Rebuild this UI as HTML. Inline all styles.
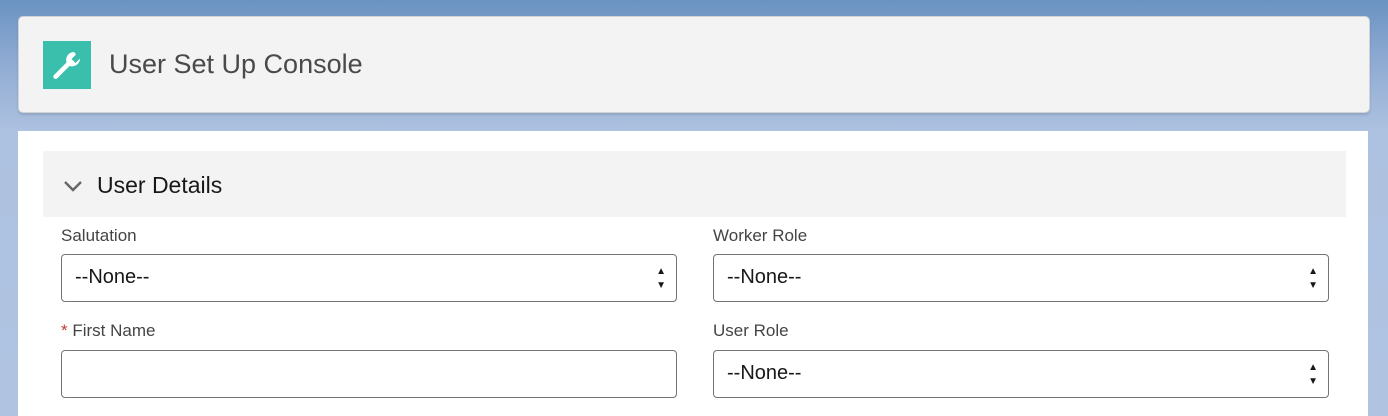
<!DOCTYPE html>
<html style="background:#b0c4e2"><head><style>
*{box-sizing:border-box;margin:0;padding:0}
body{width:1388px;height:416px;overflow:hidden;font-family:"Liberation Sans",sans-serif;background:linear-gradient(#6a93c2 0px,#8eaad2 60px,#adc1e0 130px,#b0c4e2 416px);position:relative}
.hdr{position:absolute;left:18px;top:16px;width:1352px;height:97px;background:#f3f3f3;border:1px solid #d0d3d8;border-radius:5px;box-shadow:0 2px 2px rgba(0,0,0,.12)}
.icon{position:absolute;left:24px;top:24px;width:48px;height:48px;background:#3bbfad}
.title{position:absolute;left:90px;top:32px;font-size:27px;color:#4a4a4a;font-weight:300}
.card{position:absolute;left:18px;top:131px;width:1350px;height:285px;background:#fff}
.sec{position:absolute;left:25px;top:20px;width:1303px;height:66px;background:#f3f3f3}
.sec span{position:absolute;left:54px;top:21px;font-size:23px;color:#181818}
.lbl{position:absolute;font-size:17px;color:#444}
.box{position:absolute;width:616px;height:48px;border:1px solid #747474;border-radius:4px;font-size:20px;color:#181818;padding:11px 0 0 13px}
.arr{position:absolute;right:10px;top:10px;font-size:10px;line-height:14px;color:#181818}
</style></head><body>
<div class="hdr"><div class="icon"><svg width="48" height="48" viewBox="0 0 48 48"><path d="M31 11a8 8 0 0 0-7.5 10.5L11 34a2.3 2.3 0 0 0 3.3 3.3L26.5 25A8 8 0 0 0 37 17.5l-4.5 4.5-4-4 4.5-4.5A8 8 0 0 0 31 11z" fill="#fff"/></svg></div><div class="title">User Set Up Console</div></div>
<div class="card">
<div class="sec"><svg style="position:absolute;left:20px;top:28px" width="20" height="14" viewBox="0 0 20 14"><path d="M2 3l8 8 8-8" fill="none" stroke="#666" stroke-width="2.4"/></svg><span>User Details</span></div>
<div class="lbl" style="left:43px;top:95px">Salutation</div>
<div class="lbl" style="left:695px;top:95px">Worker Role</div>
<div class="box" style="left:43px;top:123px">--None--<div class="arr">▲<br>▼</div></div>
<div class="box" style="left:695px;top:123px">--None--<div class="arr">▲<br>▼</div></div>
<div class="lbl" style="left:43px;top:190px"><span style="color:#c23934">*</span> First Name</div>
<div class="lbl" style="left:695px;top:190px">User Role</div>
<div class="box" style="left:43px;top:219px"></div>
<div class="box" style="left:695px;top:219px">--None--<div class="arr">▲<br>▼</div></div>
</div>
</body></html>
